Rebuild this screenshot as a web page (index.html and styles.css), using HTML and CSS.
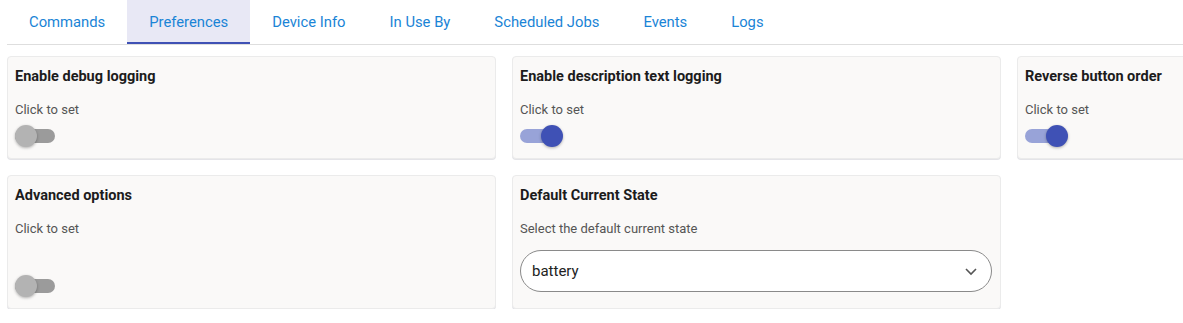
FILE: index.html
```html
<!DOCTYPE html>
<html>
<head>
  <meta name="viewport" content="width=device-width, initial-scale=1">
  <title>Device Preferences</title>
  <link rel="stylesheet" href="styles.css">
</head>
<body>
  <nav class="tabs">
    <a class="tab">Commands</a>
    <a class="tab active">Preferences</a>
    <a class="tab">Device Info</a>
    <a class="tab">In Use By</a>
    <a class="tab">Scheduled Jobs</a>
    <a class="tab">Events</a>
    <a class="tab">Logs</a>
  </nav>

  <section class="pref-grid">
    <div class="pref-card">
      <h4 class="pref-title">Enable debug logging</h4>
      <p class="pref-desc">Click to set</p>
      <div class="toggle"><span class="track"></span><span class="knob"></span></div>
    </div>
    <div class="pref-card">
      <h4 class="pref-title">Enable description text logging</h4>
      <p class="pref-desc">Click to set</p>
      <div class="toggle on"><span class="track"></span><span class="knob"></span></div>
    </div>
    <div class="pref-card">
      <h4 class="pref-title">Reverse button order</h4>
      <p class="pref-desc">Click to set</p>
      <div class="toggle on"><span class="track"></span><span class="knob"></span></div>
    </div>
    <div class="pref-card">
      <h4 class="pref-title">Advanced options</h4>
      <p class="pref-desc">Click to set</p>
      <div class="toggle"><span class="track"></span><span class="knob"></span></div>
    </div>
    <div class="pref-card">
      <h4 class="pref-title">Default Current State</h4>
      <p class="pref-desc">Select the default current state</p>
      <div class="select-box">
        <span>battery</span>
        <svg class="chevron" width="24" height="24" viewBox="0 0 24 24"><path d="M7 10l5 5 5-5" fill="none" stroke="#555" stroke-width="1.6"/></svg>
      </div>
    </div>
  </section>
</body>
</html>
```

FILE: styles.css
```css
html, body {
  margin: 0;
  overflow: hidden;
}

body {
  padding: 0 0 0 7px;
  font-family: Roboto, "Liberation Sans", sans-serif;
  color: #222;
  background-color: white;
}

.tabs {
  display: flex;
  border-bottom: 1px solid #dedede;
}

.tab {
  display: block;
  height: 40px;
  padding: 2px 22px 0;
  line-height: 40px;
  font-size: 14.8px;
  color: #1a84d6;
  border-bottom: 2px solid transparent;
}

.tab.active {
  background-color: #e8e8f5;
  border-bottom-color: #3f51b5;
}

.pref-grid {
  display: grid;
  grid-template-columns: repeat(3, 489px);
  gap: 16px;
  margin-top: 11px;
}

.pref-card {
  display: flex;
  flex-direction: column;
  align-items: flex-start;
  padding: 10px 8px 11px 7px;
  border: 1px solid #ebebeb;
  border-radius: 4px;
  background-color: #faf9f8;
  box-shadow: 0 1px 0 #e4e4e8;
}

.pref-title {
  margin: 0;
  font-size: 14.5px;
  font-weight: 700;
  line-height: 20px;
  color: #1c1c1c;
}

.pref-desc {
  margin: 14px 0 0;
  font-size: 13px;
  line-height: 18px;
  color: #555;
}

/* switch */
.toggle {
  position: relative;
  width: 43px;
  height: 22px;
  margin-top: auto;
}

.pref-desc + .toggle {
  margin-top: 6px;
}

.pref-card:nth-child(4) .toggle {
  margin-top: auto;
}

.track {
  position: absolute;
  left: 0;
  top: 4px;
  width: 40px;
  height: 14px;
  border-radius: 7px;
  background-color: #9b9b9b;
}

.knob {
  position: absolute;
  left: 0;
  top: 0;
  width: 22px;
  height: 22px;
  border-radius: 50%;
  background-color: #b3b3b3;
  box-shadow: 0 1px 3px rgba(0, 0, 0, 0.3);
}

.toggle.on .track {
  width: 38px;
  background-color: #98a3d8;
}

.toggle.on .knob {
  left: 21px;
  background-color: #3f51b5;
}

/* dropdown */
.select-box {
  display: flex;
  align-items: center;
  justify-content: space-between;
  align-self: stretch;
  box-sizing: border-box;
  height: 42px;
  margin: 12px 0 5px;
  padding: 0 8px 0 11px;
  border: 1px solid #8a8a8a;
  border-radius: 21px;
  background-color: white;
  font-size: 15px;
  color: #222;
}
```
